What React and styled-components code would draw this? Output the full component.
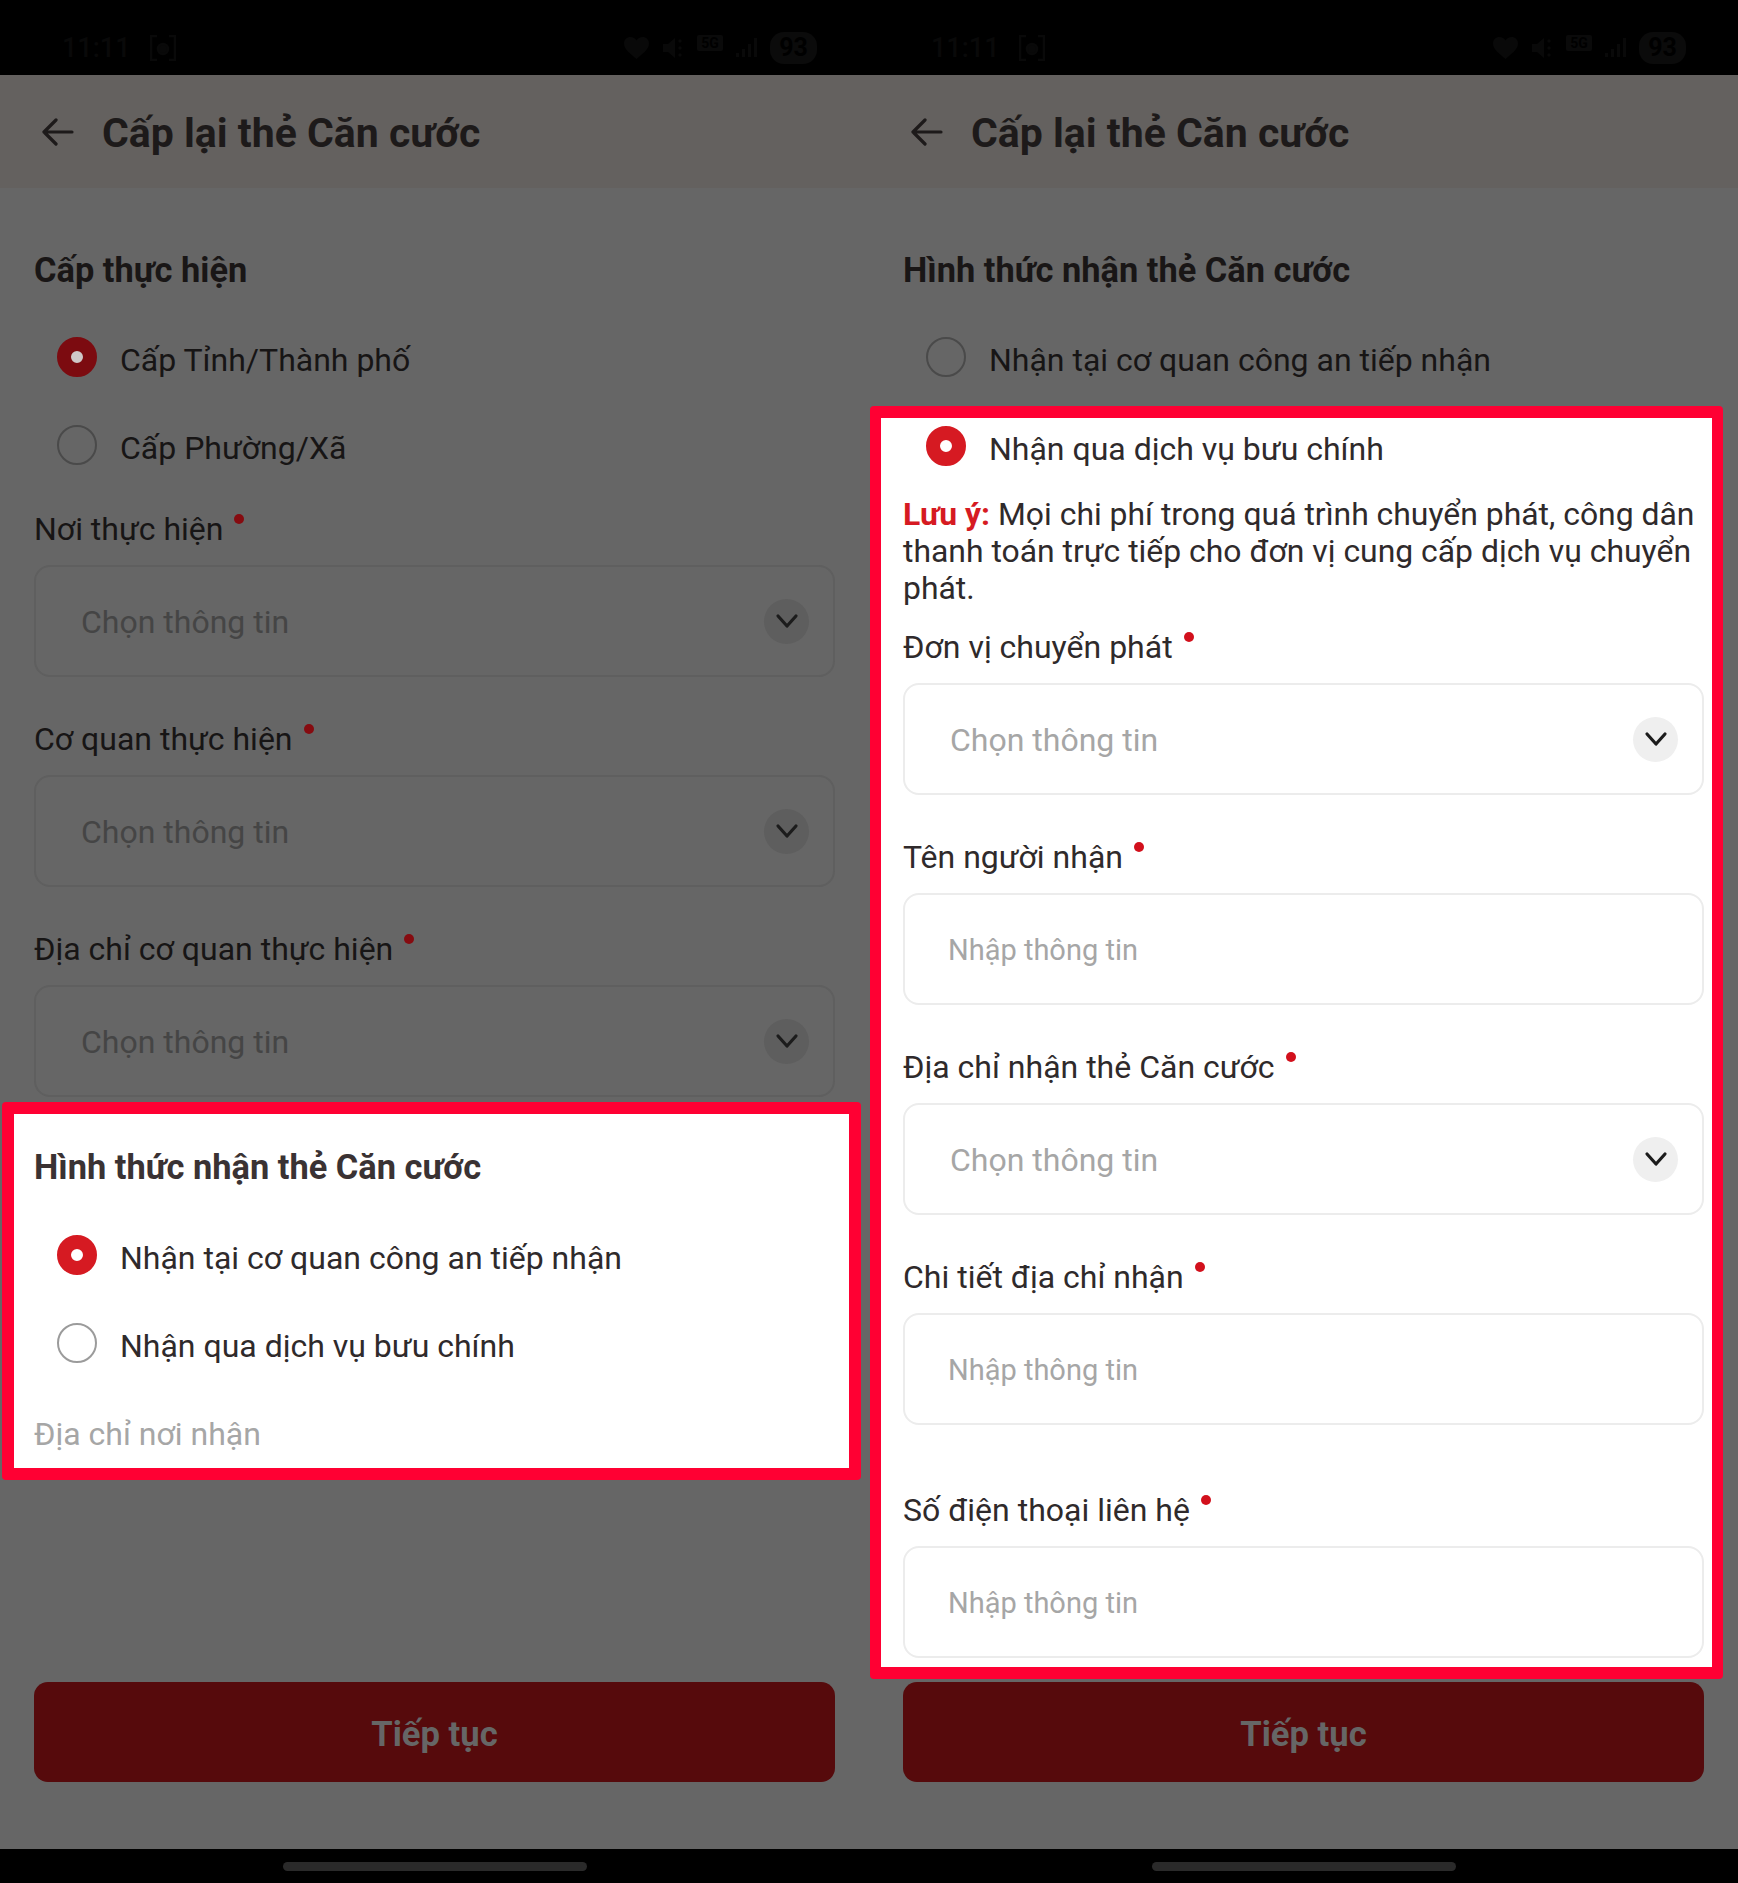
import React from 'react';
import styled, { createGlobalStyle } from 'styled-components';

const GlobalStyle = createGlobalStyle`
    html, body {
        margin: 0;
        padding: 0;
        background: #000;
    }
    * {
        box-sizing: border-box;
    }
`

const Page = styled.div`
    width: 1738px;
    height: 1883px;
    display: grid;
    grid-template-columns: 869px 869px;
    font-family: Roboto, "Noto Sans", sans-serif;
`

const Phone = styled.div`
    --ink: #171515;
    --heading: #191616;
    --red: #7c0b10;
    --dot: #860b10;
    --muted: #454545;
    --line: #5f5f5f;
    --chip: #5e5e5e;
    --ring: #4a4a4a;
    --hole: #cfc8c8;
    height: 1883px;
    display: flex;
    flex-direction: column;
    background: #666;
`

const StatusBar = styled.div`
    height: 75px;
    flex: none;
    background: #000;
    display: flex;
    justify-content: space-between;
    align-items: center;
    padding: 20px 52px 0 62px;
    color: #090909;
`

const Time = styled.div`
    display: flex;
    align-items: center;
    gap: 19px;
    font-size: 27px;
    font-weight: 500;
`

const StatusIcons = styled.div`
    display: flex;
    align-items: center;
    gap: 13px;
`

const Network = styled.span`
    width: 26px;
    height: 16px;
    margin-top: -10px;
    border-radius: 2px;
    background: #0a0a0a;
    color: #000;
    font-size: 14px;
    font-weight: 700;
    line-height: 16px;
    text-align: center;
`

const Battery = styled.span`
    width: 47px;
    height: 32px;
    border-radius: 14px;
    background: #0b0b0b;
    color: #000;
    font-size: 25px;
    font-weight: 700;
    display: flex;
    align-items: center;
    justify-content: center;
`

const Header = styled.header`
    height: 113px;
    flex: none;
    background: #64615f;
    display: flex;
    align-items: center;
    gap: 28px;
    padding: 0 0 0 42px;
`

const Title = styled.h1`
    margin: 2px 0 0;
    font-size: 41px;
    font-weight: 700;
    color: #1d1a1a;
`

const Body = styled.main`
    flex: 1;
    display: flex;
    flex-direction: column;
    padding: 0 34px;
`

const Highlight = styled.section`
    --ink: #2f2a2b;
    --heading: #3a3233;
    --red: #d61a22;
    --dot: #d2101c;
    --muted: #a6a6a6;
    --line: #ececec;
    --chip: #efefef;
    --ring: #9b9b9b;
    --hole: #fff;
    background: #fff;
    border: 12px solid #ff0033;
    border-radius: 4px;
    display: flex;
    flex-direction: column;
`

const LeftHighlight = styled(Highlight)`
    margin: 5px -26px 0 -32px;
    height: 378px;
    padding: 0 15px 0 20px;
`

const RightHighlight = styled(Highlight)`
    margin: 4px -19px 0 -33px;
    height: 1273px;
    border-width: 12px 11px;
    padding: 0 8px 0 22px;
`

const SectionTitle = styled.h2`
    margin: 0;
    height: 42px;
    line-height: 42px;
    font-size: 34.4px;
    font-weight: 700;
    color: var(--heading);
    margin-top: ${p => p.$top}px;
`

const Options = styled.div`
    display: flex;
    flex-direction: column;
    margin-top: ${p => p.$top}px;
`

const Option = styled.div`
    height: ${p => p.$height}px;
    display: flex;
    align-items: center;
    gap: 23px;
    padding: 3px 0 0 23px;
    font-size: 32px;
    color: var(--ink);
`

const Radio = styled.span`
    width: 40px;
    height: 40px;
    flex: none;
    border-radius: 50%;
    background: ${p => (p.$on ? 'var(--hole)' : 'transparent')};
    border: ${p => (p.$on ? '14px solid var(--red)' : '2px solid var(--ring)')};
    margin-top: -5px;
`

const Note = styled.p`
    margin: 20px 0 0;
    font-size: 31.9px;
    line-height: 37px;
    color: var(--ink);
`

const NoteLabel = styled.strong`
    font-weight: 700;
    color: var(--red);
`

const Field = styled.div`
    display: flex;
    flex-direction: column;
    margin-top: ${p => p.$top}px;
`

const Label = styled.label`
    height: 38px;
    line-height: 38px;
    font-size: 32px;
    color: var(--ink);
    display: flex;
`

const Dot = styled.span`
    width: 10px;
    height: 10px;
    border-radius: 50%;
    background: var(--dot);
    margin: 0 0 0 11px;
    position: relative;
    top: 4px;
`

const Control = styled.div`
    height: 112px;
    border: 2px solid var(--line);
    border-radius: 16px;
    margin-top: 17px;
    display: flex;
    align-items: center;
    justify-content: space-between;
    padding: 2px 24px 0 ${p => (p.$input ? 43 : 45)}px;
`

const Placeholder = styled.span`
    font-size: ${p => (p.$input ? 29 : 32)}px;
    color: var(--muted);
`

const Chevron = styled.span`
    width: 45px;
    height: 45px;
    margin-top: -2px;
    border-radius: 50%;
    background: var(--chip);
    display: flex;
    align-items: center;
    justify-content: center;
    color: #1c1c1c;
`

const Plain = styled.div`
    font-size: 32px;
    line-height: 38px;
    color: var(--muted);
    margin-top: 27px;
`

const Footer = styled.div`
    margin-top: auto;
    padding: 0 34px 67px;
`

const Button = styled.button`
    width: 100%;
    height: 100px;
    padding: 3px 0 0;
    border: 0;
    border-radius: 14px;
    background: #560a0c;
    color: #666;
    font: 700 34.6px Roboto, sans-serif;
`

const HomeBar = styled.div`
    height: 34px;
    flex: none;
    background: #000;
    display: flex;
    justify-content: center;
    padding-top: 13px;
`

const HomePill = styled.span`
    width: 304px;
    height: 9px;
    border-radius: 5px;
    background: #2a2a2a;
`

const Back = () => (
    <svg width="32" height="28" viewBox="0 0 32 28" fill="none" stroke="#1d1a1a" strokeWidth="3.2" strokeLinecap="round" strokeLinejoin="round">
        <path d="M2 14h28M14 2 2 14l12 12" />
    </svg>
)

const Down = () => (
    <svg width="24" height="24" viewBox="0 0 24 24" fill="none" stroke="currentColor" strokeWidth="3.2" strokeLinecap="round" strokeLinejoin="round">
        <path d="M3 7l9 10 9-10" />
    </svg>
)

const Status = () => (
    <StatusBar>
        <Time>
            11:11
            <svg width="26" height="26" viewBox="0 0 26 26" fill="none" stroke="currentColor" strokeWidth="2.5">
                <path d="M7 1H1v24h6M19 1h6v24h-6" />
                <circle cx="13" cy="14" r="5" fill="currentColor" />
            </svg>
        </Time>
        <StatusIcons>
            <svg width="25" height="22" viewBox="0 0 25 22" fill="currentColor">
                <path d="M12.5 22C7 17 0 12.500 0 6.500 0 2.500 3 0 6.500 0c2.500 0 4.700 1.300 6 3.500C13.800 1.300 16 0 18.500 0 22 0 25 2.500 25 6.500 25 12.500 18 17 12.500 22z" />
            </svg>
            <svg width="22" height="24" viewBox="0 0 22 24" fill="currentColor">
                <path d="M1 8h5l7-6v20l-7-6H1zM16 5l2-2 2 2-2 2zM16 12l2-2 2 2-2 2zM16 19l2-2 2 2-2 2z" />
            </svg>
            <Network>5G</Network>
            <svg width="21" height="19" viewBox="0 0 21 19" fill="currentColor">
                <path d="M0 15h3v4H0zM6 11h3v8H6zM12 6h3v13h-3zM18 0h3v19h-3z" />
            </svg>
            <Battery>93</Battery>
        </StatusIcons>
    </StatusBar>
)

const Top = () => (
    <Header>
        <Back />
        <Title>Cấp lại thẻ Căn cước</Title>
    </Header>
)

const FormField = ({ label, top, input, placeholder }) => (
    <Field $top={top}>
        <Label>{label}<Dot /></Label>
        <Control $input={input}>
            <Placeholder $input={input}>{placeholder}</Placeholder>
            {!input && <Chevron><Down /></Chevron>}
        </Control>
    </Field>
)

const Choice = ({ on, height = 88, children }) => (
    <Option $height={height}>
        <Radio $on={on} />
        {children}
    </Option>
)

const Continue = () => (
    <Footer>
        <Button>Tiếp tục</Button>
    </Footer>
)

const Home = () => (
    <HomeBar>
        <HomePill />
    </HomeBar>
)

const App = () => {
    return (
        <>
            <GlobalStyle />
            <Page>
                <Phone>
                    <Status />
                    <Top />
                    <Body>
                        <SectionTitle $top={61}>Cấp thực hiện</SectionTitle>
                        <Options $top={23}>
                            <Choice on>Cấp Tỉnh/Thành phố</Choice>
                            <Choice>Cấp Phường/Xã</Choice>
                        </Options>
                        <FormField top={20} label="Nơi thực hiện" placeholder="Chọn thông tin" />
                        <FormField top={43} label="Cơ quan thực hiện" placeholder="Chọn thông tin" />
                        <FormField top={43} label="Địa chỉ cơ quan thực hiện" placeholder="Chọn thông tin" />
                        <LeftHighlight>
                            <SectionTitle $top={32}>Hình thức nhận thẻ Căn cước</SectionTitle>
                            <Options $top={24}>
                                <Choice on>Nhận tại cơ quan công an tiếp nhận</Choice>
                                <Choice>Nhận qua dịch vụ bưu chính</Choice>
                            </Options>
                            <Plain>Địa chỉ nơi nhận</Plain>
                        </LeftHighlight>
                    </Body>
                    <Continue />
                    <Home />
                </Phone>
                <Phone>
                    <Status />
                    <Top />
                    <Body>
                        <SectionTitle $top={61}>Hình thức nhận thẻ Căn cước</SectionTitle>
                        <Options $top={23}>
                            <Choice>Nhận tại cơ quan công an tiếp nhận</Choice>
                        </Options>
                        <RightHighlight>
                            <Choice on height={58}>Nhận qua dịch vụ bưu chính</Choice>
                            <Note><NoteLabel>Lưu ý:</NoteLabel> Mọi chi phí trong quá trình chuyển phát, công dân thanh toán trực tiếp cho đơn vị cung cấp dịch vụ chuyển phát.</Note>
                            <FormField top={21} label="Đơn vị chuyển phát" placeholder="Chọn thông tin" />
                            <FormField top={43} label="Tên người nhận" input placeholder="Nhập thông tin" />
                            <FormField top={43} label="Địa chỉ nhận thẻ Căn cước" placeholder="Chọn thông tin" />
                            <FormField top={43} label="Chi tiết địa chỉ nhận" input placeholder="Nhập thông tin" />
                            <FormField top={66} label="Số điện thoại liên hệ" input placeholder="Nhập thông tin" />
                        </RightHighlight>
                    </Body>
                    <Continue />
                    <Home />
                </Phone>
            </Page>
        </>
    )
}

export default App
